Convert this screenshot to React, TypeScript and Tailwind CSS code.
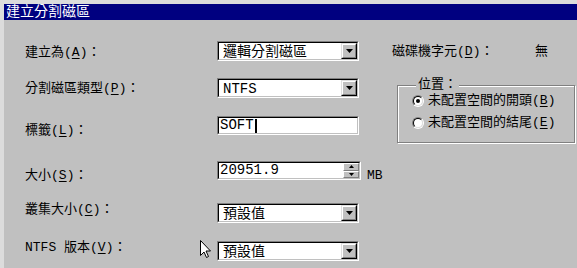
import type { ReactNode } from 'react';

const font = { fontFamily: '"Liberation Mono", "Noto Sans CJK TC", monospace' };

function Mn({ children }: { children: ReactNode }) {
  return <span className="underline underline-offset-2">{children}</span>;
}

function Sunken({ className, children }: { className: string; children: ReactNode }) {
  return (
    <div className={`border border-t-[#808080] border-l-[#808080] border-b-white border-r-white ${className}`}>
      <div className="flex h-full border border-t-black border-l-black border-b-[#c0c0c0] border-r-[#c0c0c0] bg-white overflow-hidden">
        {children}
      </div>
    </div>
  );
}

function Combo({ value }: { value: string }) {
  return (
    <Sunken className="w-[142px] h-[20px]">
      <div className="flex-1 pl-[4px] pt-px text-[14px] leading-[16px] whitespace-nowrap">{value}</div>
      <div className="w-[16px] h-[16px] bg-[#c0c0c0] border border-t-[#dfdfdf] border-l-[#dfdfdf] border-b-black border-r-black">
        <div className="h-full flex items-center justify-center border border-t-white border-l-white border-b-[#808080] border-r-[#808080]">
          <svg width="7" height="4" viewBox="0 0 7 4">
            <path d="M0 0H7L3.5 4Z" fill="#000" />
          </svg>
        </div>
      </div>
    </Sunken>
  );
}

function Row({ label, rowClass, labelClass, children }: { label: ReactNode; rowClass: string; labelClass: string; children: ReactNode }) {
  return (
    <div className={`flex items-start ${rowClass}`}>
      <div className={`w-[192px] shrink-0 text-[13px] leading-[16px] ${labelClass}`}>{label}</div>
      {children}
    </div>
  );
}

function Radio({ checked }: { checked?: boolean }) {
  return (
    <span className="flex w-[12px] h-[12px] rounded-full border border-t-[#808080] border-l-[#808080] border-b-white border-r-white">
      <span className="flex flex-1 items-center justify-center rounded-full border border-t-black border-l-black border-b-[#dfdfdf] border-r-[#dfdfdf] bg-white">
        {checked && <span className="w-[4px] h-[4px] rounded-full bg-black" />}
      </span>
    </span>
  );
}

export default function App() {
  return (
    <div className="relative w-[577px] h-[268px] overflow-hidden bg-[#c0c0c0] border-t-4 border-l-4 border-[#dcdcdc] text-black" style={font}>
      {/* Title bar */}
      <div className="h-[16px] bg-[#000080] pl-[2px] text-[14px] leading-[16px] text-white">建立分割磁區</div>

      <div className="flex">
        {/* Left column */}
        <div className="w-[388px] shrink-0 pl-[21px]">
          <Row label={<>建立為(<Mn>A</Mn>)：</>} rowClass="mt-[21px]" labelClass="mt-[4px]">
            <Combo value="邏輯分割磁區" />
          </Row>
          <Row label={<>分割磁區類型(<Mn>P</Mn>)：</>} rowClass="mt-[17px]" labelClass="mt-[3px]">
            <Combo value="NTFS" />
          </Row>
          <Row label={<>標籤(<Mn>L</Mn>)：</>} rowClass="mt-[18px]" labelClass="mt-[7px]">
            <Sunken className="w-[142px] h-[19px]">
              <div className="flex items-center pl-[1px] text-[14px] leading-[15px]">
                SOFT
                <span className="ml-px w-[2px] h-[14px] bg-black" />
              </div>
            </Sunken>
          </Row>
          <Row label={<>大小(<Mn>S</Mn>)：</>} rowClass="mt-[22px]" labelClass="mt-[7px]">
            <Sunken className="w-[144px] h-[19px]">
              <div className="flex-1 pl-[1px] text-[14px] leading-[15px]">20951.9</div>
              <div className="w-[16px] flex flex-col">
                <div className="flex-1 flex items-center justify-center bg-[#c0c0c0] border border-t-white border-l-white border-b-[#808080] border-r-[#808080]">
                  <svg width="5" height="3" viewBox="0 0 5 3"><path d="M2.5 0L5 3H0Z" fill="#000" /></svg>
                </div>
                <div className="flex-1 flex items-center justify-center bg-[#c0c0c0] border border-t-white border-l-white border-b-[#808080] border-r-[#808080]">
                  <svg width="5" height="3" viewBox="0 0 5 3"><path d="M0 0H5L2.5 3Z" fill="#000" /></svg>
                </div>
              </div>
            </Sunken>
            <span className="ml-[6px] mt-[7px] text-[13px] leading-[16px]">MB</span>
          </Row>
          <Row label={<>叢集大小(<Mn>C</Mn>)：</>} rowClass="mt-[19px]" labelClass="-mt-px">
            <Combo value="預設值" />
          </Row>
          <Row label={<>NTFS 版本(<Mn>V</Mn>)：</>} rowClass="mt-[18px]" labelClass="-mt-px">
            <Combo value="預設值" />
          </Row>
        </div>

        {/* Right column */}
        <div className="flex-1 text-[13px] leading-[16px]">
          <div className="mt-[24px] flex">
            <span className="w-[143px]">磁碟機字元(<Mn>D</Mn>)：</span>
            <span>無</span>
          </div>
          <fieldset className="ml-[5px] mt-[17px] w-[178px] pl-[14px] pb-[11px] border border-[#808080] shadow-[inset_1px_1px_0_#fff,1px_1px_0_#fff]">
            <legend className="ml-[4px] px-[2px] bg-[#c0c0c0]">位置：</legend>
            <div className="flex items-center gap-[4px]">
              <Radio checked />
              <span>未配置空間的開頭(<Mn>B</Mn>)</span>
            </div>
            <div className="mt-[6px] flex items-center gap-[4px]">
              <Radio />
              <span>未配置空間的結尾(<Mn>E</Mn>)</span>
            </div>
          </fieldset>
        </div>
      </div>

      {/* Mouse pointer */}
      <svg className="absolute left-[196px] top-[236px]" width="12" height="19" viewBox="0 0 12 19">
        <path d="M0.5 0.5V15.5L4 12L6.5 17.5L8.5 16.5L6 11H10.5Z" fill="#fff" stroke="#000" strokeWidth="1" />
      </svg>
    </div>
  );
}
